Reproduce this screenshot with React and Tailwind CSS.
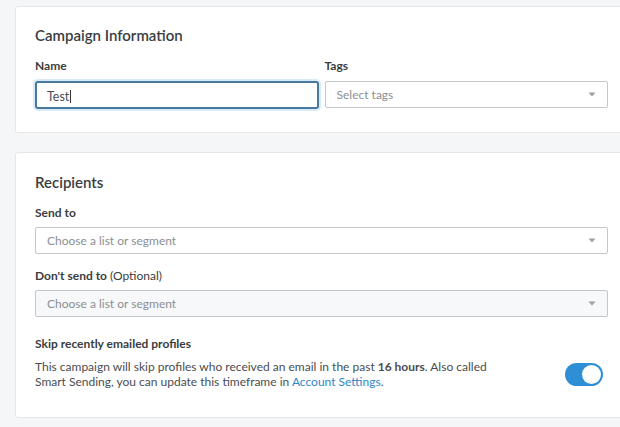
import React from 'react';

const font = { fontFamily: 'Lato, "Open Sans", sans-serif' };

function Caret() {
  return (
    <svg width="8" height="5" viewBox="0 0 8 5" className="shrink-0">
      <path d="M0.5 0.5h7L4 4.5z" fill="#9aa0a6" />
    </svg>
  );
}

function Select({ placeholder, muted }) {
  return (
    <div
      className={`flex h-[27px] items-center justify-between rounded-[2px] border border-[#c4c7ca] pl-[11px] pr-[11px] ${
        muted ? 'bg-[#f7f8f9]' : 'bg-white'
      }`}
    >
      <span className="text-[12px] text-[#8a8f94]">{placeholder}</span>
      <Caret />
    </div>
  );
}

export default function App() {
  return (
    <div className="h-[427px] w-[620px] overflow-hidden bg-[#f5f6f7] pl-[15px] pt-[6px]" style={font}>
      <div className="w-[613px] rounded-[3px] border border-[#e4e6e8] bg-white px-[19px] pb-[23px] pt-[18px]">
        <h2 className="text-[15px] font-semibold leading-[20px] text-[#3a3d40]">Campaign Information</h2>
        <div className="mt-[12px] grid grid-cols-2 gap-[6px]">
          <div>
            <p className="text-[12px] font-bold leading-[18px] text-[#3a3d40]">Name</p>
            <div className="mt-[6px] h-[28px] rounded-[3px] border-2 border-[#46799b] pl-[10px] shadow-[0_0_0_2px_#d6eaf7]">
              <span className="text-[12.5px] leading-[24px] text-[#4a4d50]">
                Test<span className="ml-[1px] inline-block h-[13px] w-px translate-y-[2px] bg-[#333]" />
              </span>
            </div>
          </div>
          <div>
            <p className="text-[12px] font-bold leading-[18px] text-[#3a3d40]">Tags</p>
            <div className="mt-[6px]">
              <Select placeholder="Select tags" />
            </div>
          </div>
        </div>
      </div>

      <div className="mt-[19px] w-[613px] rounded-[3px] border border-[#e4e6e8] bg-white px-[19px] pb-[28px] pt-[19px]">
        <h2 className="text-[15px] font-semibold leading-[20px] text-[#3a3d40]">Recipients</h2>
        <p className="mt-[12px] text-[12px] font-bold leading-[18px] text-[#3a3d40]">Send to</p>
        <div className="mt-[5px]">
          <Select placeholder="Choose a list or segment" />
        </div>
        <p className="mt-[13px] text-[12px] leading-[18px] text-[#3a3d40]">
          <span className="font-bold">Don't send to</span> (Optional)
        </p>
        <div className="mt-[5px]">
          <Select placeholder="Choose a list or segment" muted />
        </div>
        <p className="mt-[18px] text-[12px] font-bold leading-[18px] text-[#3a3d40]">Skip recently emailed profiles</p>
        <div className="mt-[6px] flex items-center justify-between pr-[5px]">
          <p className="text-[12px] leading-[15px] text-[#4a4d50]">
            This campaign will skip profiles who received an email in the past <span className="font-bold">16 hours</span>. Also called
            <br />
            Smart Sending, you can update this timeframe in <span className="text-[#2f86c4]">Account Settings</span>.
          </p>
          <div className="flex h-[23px] w-[38px] items-center justify-end rounded-full bg-[#2f8fd6] pr-[2px]">
            <div className="h-[19px] w-[19px] rounded-full bg-white" />
          </div>
        </div>
      </div>
    </div>
  );
}
